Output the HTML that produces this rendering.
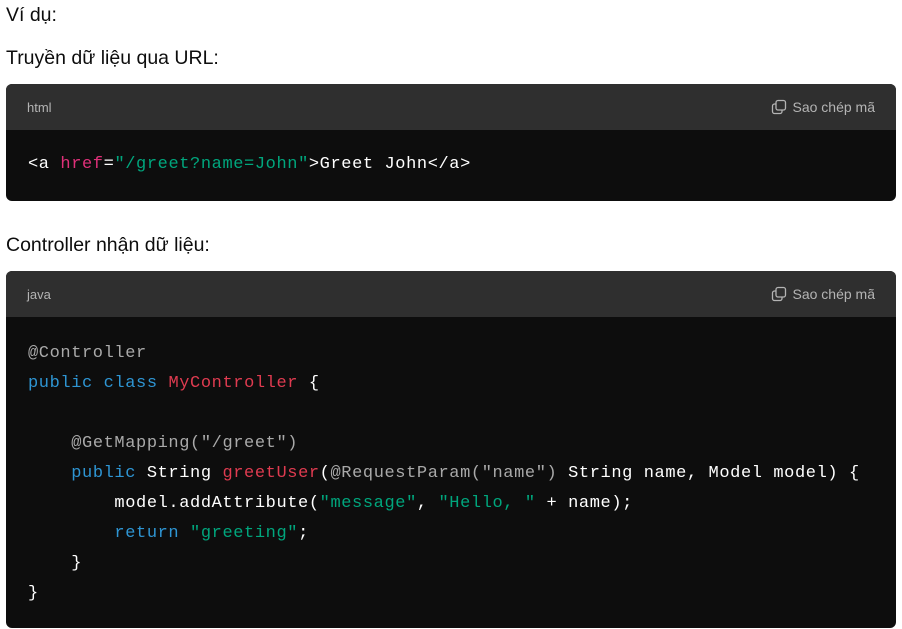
<!DOCTYPE html>
<html><head><meta charset="utf-8"><style>
body{margin:0;background:#fff;width:902px;height:629px;overflow:hidden;font-family:"Liberation Sans",sans-serif;color:#0d0d0d}
p{position:absolute;left:6px;margin:0;font-size:19.5px;line-height:22px}
.blk{position:absolute;left:6px;width:890px;background:#0d0d0d;border-radius:6px;overflow:hidden}
.hd{height:46px;background:#2f2f2f;color:#b4b4b4;font-size:13px;display:flex;align-items:center;justify-content:space-between;padding:0 21px}
.cp{display:flex;align-items:center;gap:6px;font-size:14px}
pre{margin:0;padding:0 22px;font-family:"Liberation Mono",monospace;font-size:17px;letter-spacing:0.6px;color:#fff;line-height:30px}
.g{color:#a9a9a9}.b{color:#2e95d3}.r{color:#df3b50}.s{color:#00a67d}.p{color:#df3079}
</style></head><body>
<p style="top:4px">Ví dụ:</p>
<p style="top:47px">Truyền dữ liệu qua URL:</p>
<div class="blk" style="top:84px;height:117px">
<div class="hd"><span>html</span><span class="cp"><svg width="16" height="16" viewBox="0 0 16 16" fill="none" stroke="#b4b4b4" stroke-width="1.3"><rect x="5" y="1.5" width="9.5" height="9.5" rx="2"/><path d="M11 11v1.5a2 2 0 0 1-2 2H3.5a2 2 0 0 1-2-2V7a2 2 0 0 1 2-2H5"/></svg>Sao chép mã</span></div>
<pre style="padding-top:20px">&lt;a <span class="p">href</span>=<span class="s">"/greet?name=John"</span>&gt;Greet John&lt;/a&gt;</pre>
</div>
<p style="top:234px">Controller nhận dữ liệu:</p>
<div class="blk" style="top:271px;height:357px">
<div class="hd"><span>java</span><span class="cp"><svg width="16" height="16" viewBox="0 0 16 16" fill="none" stroke="#b4b4b4" stroke-width="1.3"><rect x="5" y="1.5" width="9.5" height="9.5" rx="2"/><path d="M11 11v1.5a2 2 0 0 1-2 2H3.5a2 2 0 0 1-2-2V7a2 2 0 0 1 2-2H5"/></svg>Sao chép mã</span></div>
<pre style="padding-top:22px"><span class="g">@Controller</span>
<span class="b">public</span> <span class="b">class</span> <span class="r">MyController</span> {

    <span class="g">@GetMapping("/greet")</span>
    <span class="b">public</span> String <span class="r">greetUser</span>(<span class="g">@RequestParam("name")</span> String name, Model model) {
        model.addAttribute(<span class="s">"message"</span>, <span class="s">"Hello, "</span> + name);
        <span class="b">return</span> <span class="s">"greeting"</span>;
    }
}</pre>
</div>
</body></html>
